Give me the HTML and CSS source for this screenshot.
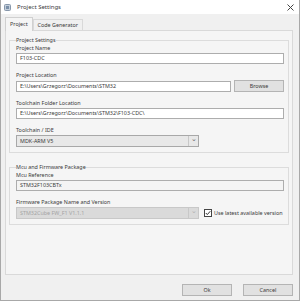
FILE: index.html
```html
<!DOCTYPE html>
<html>
    <head>
        <title>Project Settings</title>
        <link rel="stylesheet" href="styles.css">
    </head>
    <body>
        <div class="window">
            <div class="titlebar">
                <svg class="app-icon" width="7" height="7" viewBox="0 0 7 7">
                    <rect x="0.5" y="0.5" width="6" height="6" rx="1" fill="#c3ceda" stroke="#8797ab"/>
                    <rect x="2" y="2" width="3" height="3" fill="#7a8fa8"/>
                </svg>
                <span class="title">Project Settings</span>
                <svg class="close" width="7" height="7" viewBox="0 0 7 7">
                    <path d="M0.5 0.5 L6.5 6.5 M6.5 0.5 L0.5 6.5" stroke="#444" stroke-width="1"/>
                </svg>
            </div>

            <div class="tabs">
                <div class="tab active">Project</div>
                <div class="tab">Code Generator</div>
            </div>

            <div class="tab-page">
                <fieldset class="group">
                    <legend>Project Settings</legend>
                    <div class="field">
                        <label>Project Name</label>
                        <div class="input">F103-CDC</div>
                    </div>
                    <div class="field">
                        <label>Project Location</label>
                        <div class="row">
                            <div class="input grow">E:\Users\Grzegorz\Documents\STM32</div>
                            <button class="btn browse">Browse</button>
                        </div>
                    </div>
                    <div class="field">
                        <label>Toolchain Folder Location</label>
                        <div class="input">E:\Users\Grzegorz\Documents\STM32\F103-CDC\</div>
                    </div>
                    <div class="field">
                        <label>Toolchain / IDE</label>
                        <div class="select">
                            <span class="value">MDK-ARM V5</span>
                            <span class="arrow">&#8964;</span>
                        </div>
                    </div>
                </fieldset>

                <fieldset class="group group-mcu">
                    <legend>Mcu and Firmware Package</legend>
                    <div class="field">
                        <label>Mcu Reference</label>
                        <div class="input readonly">STM32F103CBTx</div>
                    </div>
                    <div class="field">
                        <label>Firmware Package Name and Version</label>
                        <div class="row">
                            <div class="select disabled">
                                <span class="value">STM32Cube FW_F1 V1.1.1</span>
                                <span class="arrow">&#8964;</span>
                            </div>
                            <div class="check">
                                <svg width="8" height="8" viewBox="0 0 8 8">
                                    <rect x="0.5" y="0.5" width="7" height="7" fill="#fff" stroke="#444"/>
                                    <path d="M1.8 4 L3.3 5.6 L6.3 2.2" fill="none" stroke="#333" stroke-width="1"/>
                                </svg>
                                <span>Use latest available version</span>
                            </div>
                        </div>
                    </div>
                </fieldset>
            </div>

            <div class="footer">
                <button class="btn">Ok</button>
                <button class="btn">Cancel</button>
            </div>
        </div>
    </body>
</html>
```

FILE: styles.css
```css
html, body {
    margin: 0;
    padding: 0;
    background-color: #f0f0f0;
}
body {
    font-family: "Noto Sans", "Open Sans", sans-serif;
    font-size: 5.4px;
    color: #3a3a3a;
}
.window {
    width: 300px;
    height: 301px;
    box-sizing: border-box;
    border: 1px solid #a8a8a8;
    border-top: none;
    background-color: #f0f0f0;
    display: flex;
    flex-direction: column;
}
.titlebar {
    height: 14px;
    background-color: #ffffff;
    display: flex;
    align-items: center;
    padding: 0 5px 0 3px;
}
.app-icon {
    margin-right: 6px;
}
.title {
    flex: 1;
    font-size: 6px;
}
/* tab strip */
.tabs {
    display: flex;
    align-items: flex-end;
    height: 16px;
    padding-left: 4px;
}
.tab {
    height: 10px;
    line-height: 10px;
    padding: 0 4px;
    border: 1px solid #d9d9d9;
    border-bottom: none;
    background-color: #f0f0f0;
}
.tab.active {
    height: 13px;
    line-height: 12px;
    margin-bottom: -1px;
    position: relative;
    z-index: 1;
    background-color: #f5f5f5;
    border-color: #d0d0d0;
}
.tab-page {
    margin: 0 6px 0 4px;
    height: 243px;
    border: 1px solid #d9d9d9;
    background-color: #f5f5f5;
    padding: 0 3px;
}
.group {
    margin: 5px 0 0 0;
    padding: 0 4px 5px 6px;
    border: 1px solid #dcdcdc;
    display: flex;
    flex-direction: column;
    gap: 7px;
}
.group legend {
    padding: 0;
    margin-left: 0;
    line-height: 8px;
    height: 8px;
}
.group-mcu {
    margin-top: 10px;
}
.field {
    display: flex;
    flex-direction: column;
}
.field label {
    line-height: 8px;
    height: 8px;
    margin-bottom: 1px;
}
.input {
    height: 11px;
    line-height: 9px;
    box-sizing: border-box;
    border: 1px solid #adadad;
    background-color: #ffffff;
    padding: 0 3px;
    white-space: nowrap;
    overflow: hidden;
}
.input.readonly {
    background-color: #f4f4f4;
}
.row {
    display: flex;
    align-items: center;
}
.grow {
    flex: 1;
}
.btn {
    font-family: inherit;
    font-size: 5.4px;
    color: #3a3a3a;
    background-color: #e1e1e1;
    border: 1px solid #b4b4b4;
    padding: 0;
    margin: 0;
}
.browse {
    width: 50px;
    height: 12px;
    margin-left: 3px;
}
.select {
    width: 183px;
    height: 12px;
    box-sizing: border-box;
    border: 1px solid #a8a8a8;
    background-color: #e8e8e8;
    display: flex;
    align-items: center;
    padding-left: 3px;
}
.select .value {
    flex: 1;
}
.select .arrow {
    width: 9px;
    height: 10px;
    line-height: 6px;
    text-align: center;
    font-size: 7px;
    color: #666;
    border-left: 1px solid #c8c8c8;
}
.select.disabled {
    background-color: #dadada;
    border-color: #c8c8c8;
    color: #a4a4a4;
}
.select.disabled .arrow {
    color: #b0b0b0;
}
.check {
    display: flex;
    align-items: center;
    margin-left: 5px;
    gap: 2px;
    white-space: nowrap;
}
.footer {
    flex: 1;
    display: flex;
    justify-content: flex-end;
    align-items: center;
    gap: 11px;
    padding-right: 6px;
}
.footer .btn {
    width: 50px;
    height: 12px;
    margin-top: 4px;
}
```
